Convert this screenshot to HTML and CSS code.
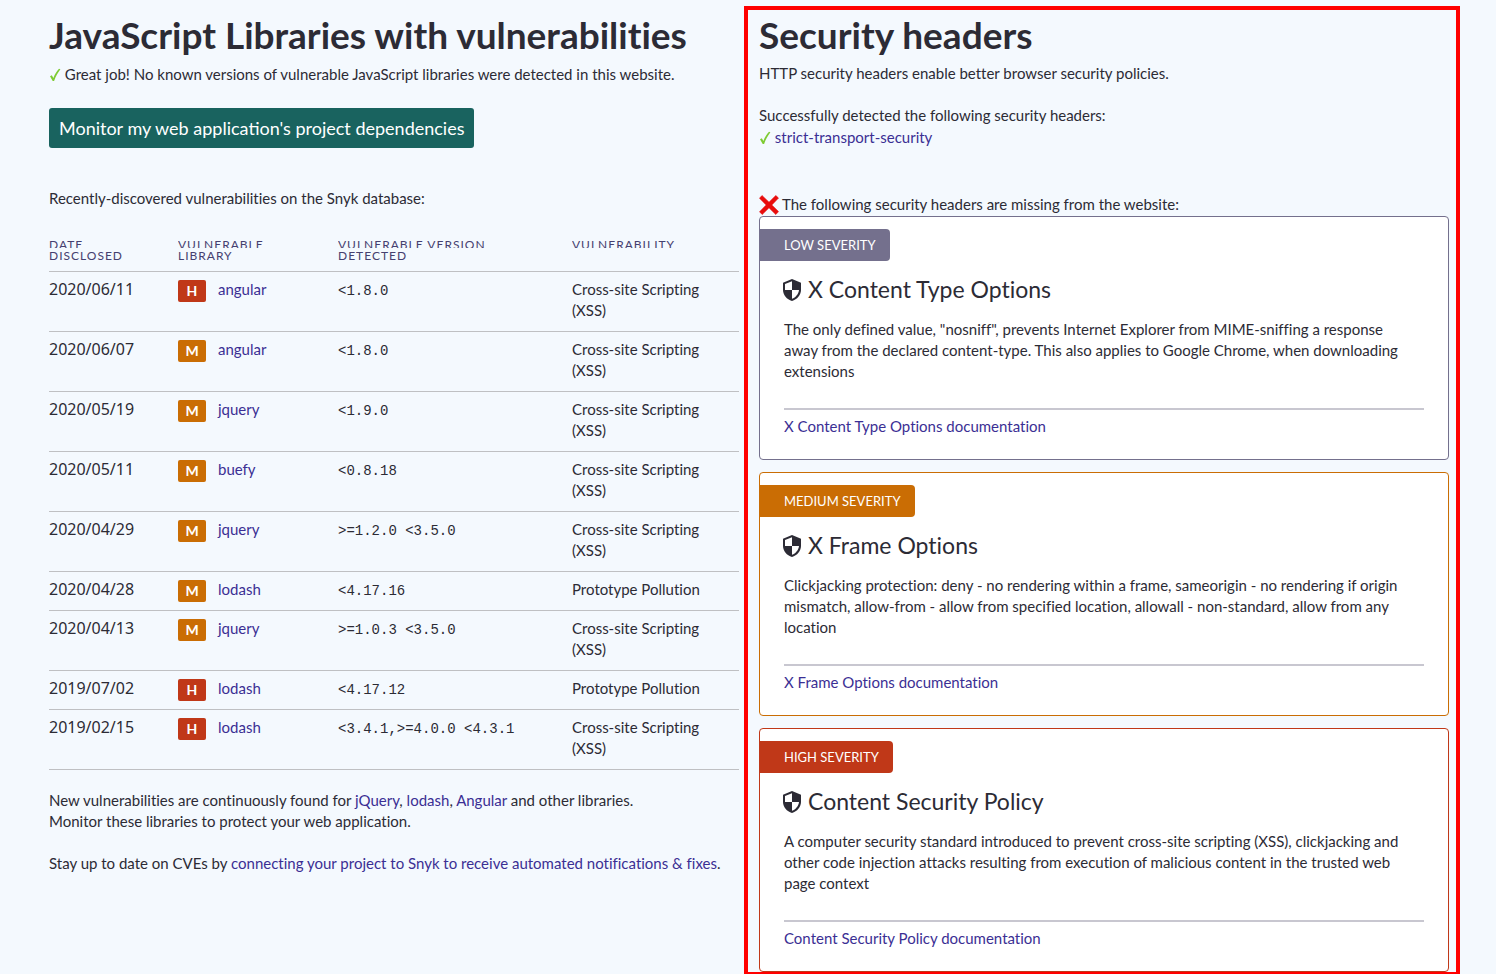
FILE: index.html
```html
<!DOCTYPE html>
<html lang="en">
<head>
<meta charset="utf-8">
<title>Website security report</title>
<link rel="stylesheet" href="styles.css">
</head>
<body>
<svg class="sprite" aria-hidden="true">
  <symbol id="check" viewBox="0 0 12 16"><path d="M1 9.200 2.800 8.200 4.400 11C5.800 7.400 7.600 4.400 10 1.800L11.400 2.200C8.800 5.600 6.600 9.600 5.100 14H3.700Z" fill="#7ecb33"/></symbol>
  <symbol id="cross" viewBox="0 0 20 20"><path d="M3 .5 10 7.200 16.800.5 19.500 3 12.800 10 19.500 16.600 16.800 19.500 10 12.800 3.200 19.500.5 16.800 7.200 10 .5 3.200Z" fill="#e80c0c" stroke="#e80c0c" stroke-width=".6"/></symbol>
  <symbol id="shield" viewBox="0 0 18 22"><path fill-rule="evenodd" d="M9 0 18 3.800V11C18 16 14.200 20.400 9 22 3.800 20.400 0 16 0 11V3.800ZM9 2.200 2 5.100V11H9ZM9 11V19.800C12.800 18.400 15.600 15 16 11Z" fill="#2c2b35"/></symbol>
</svg>
<main class="report">
  <section class="libraries">
    <h1>JavaScript Libraries with vulnerabilities</h1>
    <p class="status"><svg class="check"><use href="#check"/></svg> Great job! No known versions of vulnerable JavaScript libraries were detected in this website.</p>
    <button class="monitor" type="button">Monitor my web application's project dependencies</button>
    <p class="recent">Recently-discovered vulnerabilities on the Snyk database:</p>
    <table class="vulns">
      <thead>
        <tr>
          <th class="c-date" scope="col"><span class="top">Date</span><span class="low">disclosed</span></th>
          <th class="c-lib" scope="col"><span class="top">Vulnerable</span><span class="low">library</span></th>
          <th class="c-ver" scope="col"><span class="top">Vulnerable version</span><span class="low">detected</span></th>
          <th scope="col"><span class="top">Vulnerability</span></th>
        </tr>
      </thead>
      <tbody>
        <tr><td class="date">2020/06/11</td><td><span class="sev high">H</span><a href="#">angular</a></td><td class="ver">&lt;1.8.0</td><td>Cross-site Scripting<br>(XSS)</td></tr>
        <tr><td class="date">2020/06/07</td><td><span class="sev medium">M</span><a href="#">angular</a></td><td class="ver">&lt;1.8.0</td><td>Cross-site Scripting<br>(XSS)</td></tr>
        <tr><td class="date">2020/05/19</td><td><span class="sev medium">M</span><a href="#">jquery</a></td><td class="ver">&lt;1.9.0</td><td>Cross-site Scripting<br>(XSS)</td></tr>
        <tr><td class="date">2020/05/11</td><td><span class="sev medium">M</span><a href="#">buefy</a></td><td class="ver">&lt;0.8.18</td><td>Cross-site Scripting<br>(XSS)</td></tr>
        <tr><td class="date">2020/04/29</td><td><span class="sev medium">M</span><a href="#">jquery</a></td><td class="ver">&gt;=1.2.0 &lt;3.5.0</td><td>Cross-site Scripting<br>(XSS)</td></tr>
        <tr><td class="date">2020/04/28</td><td><span class="sev medium">M</span><a href="#">lodash</a></td><td class="ver">&lt;4.17.16</td><td>Prototype Pollution</td></tr>
        <tr><td class="date">2020/04/13</td><td><span class="sev medium">M</span><a href="#">jquery</a></td><td class="ver">&gt;=1.0.3 &lt;3.5.0</td><td>Cross-site Scripting<br>(XSS)</td></tr>
        <tr><td class="date">2019/07/02</td><td><span class="sev high">H</span><a href="#">lodash</a></td><td class="ver">&lt;4.17.12</td><td>Prototype Pollution</td></tr>
        <tr><td class="date">2019/02/15</td><td><span class="sev high">H</span><a href="#">lodash</a></td><td class="ver">&lt;3.4.1,&gt;=4.0.0 &lt;4.3.1</td><td>Cross-site Scripting<br>(XSS)</td></tr>
      </tbody>
    </table>
    <div class="notes">
      <p>New vulnerabilities are continuously found for <a href="#">jQuery</a>, <a href="#">lodash</a>, <a href="#">Angular</a> and other libraries.<br>Monitor these libraries to protect your web application.</p>
      <p>Stay up to date on CVEs by <a href="#">connecting your project to Snyk to receive automated notifications &amp; fixes</a>.</p>
    </div>
  </section>

  <section class="headers">
    <h1>Security headers</h1>
    <p class="intro">HTTP security headers enable better browser security policies.</p>
    <p class="detected">Successfully detected the following security headers:</p>
    <p class="found"><svg class="check"><use href="#check"/></svg> <a href="#">strict-transport-security</a></p>
    <p class="missing"><svg class="cross"><use href="#cross"/></svg>The following security headers are missing from the website:</p>
    <div class="cards">
      <article class="card low-card">
        <span class="badge">Low severity</span>
        <h2><svg class="shield"><use href="#shield"/></svg>X Content Type Options</h2>
        <p>The only defined value, "nosniff", prevents Internet Explorer from MIME-sniffing a response<br>away from the declared content-type. This also applies to Google Chrome, when downloading<br>extensions</p>
        <hr>
        <a href="#">X Content Type Options documentation</a>
      </article>
      <article class="card medium-card">
        <span class="badge">Medium severity</span>
        <h2><svg class="shield"><use href="#shield"/></svg>X Frame Options</h2>
        <p>Clickjacking protection: deny - no rendering within a frame, sameorigin - no rendering if origin<br>mismatch, allow-from - allow from specified location, allowall - non-standard, allow from any<br>location</p>
        <hr>
        <a href="#">X Frame Options documentation</a>
      </article>
      <article class="card high-card">
        <span class="badge">High severity</span>
        <h2><svg class="shield"><use href="#shield"/></svg>Content Security Policy</h2>
        <p>A computer security standard introduced to prevent cross-site scripting (XSS), clickjacking and<br>other code injection attacks resulting from execution of malicious content in the trusted web<br>page context</p>
        <hr>
        <a href="#">Content Security Policy documentation</a>
      </article>
    </div>
  </section>
</main>
</body>
</html>
```
FILE: styles.css
```css
* { box-sizing: border-box; }
body {
  margin: 0;
  background: #f4f9fe;
  color: #2c2b35;
  font: 15px/21px Lato, "Open Sans", sans-serif;
  font-variant-ligatures: none;
}
p, h1, h2 { margin: 0; }
a { color: #3b2f94; text-decoration: none; }
.sprite { position: absolute; width: 0; height: 0; }

.report {
  display: grid;
  grid-template-columns: minmax(0, 690fr) minmax(0, 716fr);
  column-gap: 5px;
  align-items: start;
  padding: 6px 36px 0 49px;
}
.libraries { padding-top: 4px; }
h1 { font-size: 37px; line-height: 50px; font-weight: 700; white-space: nowrap; }
.status { margin-top: 4px; }
.check { width: 12px; height: 16px; vertical-align: -3px; }
.monitor {
  display: block;
  height: 40px;
  margin-top: 23px;
  padding: 0 10px;
  border: 0;
  border-radius: 3px;
  background: #19635f;
  color: #fff;
  font: 18px/24px Lato, "Open Sans", sans-serif;
}
.recent { margin-top: 40px; }

.vulns { width: 100%; margin-top: 29px; border-collapse: separate; border-spacing: 0; table-layout: fixed; }
.c-date { width: 129px; }
.c-lib { width: 160px; }
.c-ver { width: 234px; }
.vulns th {
  padding: 0 0 8px;
  border-bottom: 1px solid #bfc0c3;
  color: #45406f;
  font-size: 12px;
  font-weight: 400;
  letter-spacing: 1px;
  text-align: left;
  text-transform: uppercase;
  vertical-align: top;
}
.top, .low { display: block; white-space: nowrap; line-height: 14px; }
.top { height: 10px; overflow: hidden; }
.low { margin-top: 1px; }
.vulns td { padding: 7px 0 10px; border-bottom: 1px solid #bfc0c3; vertical-align: baseline; white-space: nowrap; }
.vulns .date { font-family: "Noto Sans", sans-serif; font-size: 16px; }
.vulns .ver { font-family: "Liberation Mono", monospace; font-size: 14px; line-height: 17px; }
.sev {
  display: inline-block;
  width: 28px;
  height: 22px;
  margin: 1px 12px -2px 0;
  border-radius: 2px;
  color: #fff;
  font-size: 14px;
  font-weight: 700;
  text-align: center;
  vertical-align: top;
}
.high { background: #c03818; }
.medium { background: #ca6d04; }
.notes { display: grid; gap: 21px; margin-top: 20px; }

.headers { padding: 0 7px 0 11px; border: 4px solid #f00; border-bottom-width: 2px; }
.intro { margin-top: 3px; }
.detected { margin-top: 21px; }
.found { margin-top: 1px; }
.missing { display: flex; align-items: center; gap: 3px; margin-top: 46px; }
.cross { width: 20px; height: 20px; }

.cards { display: grid; grid-template-columns: minmax(0, 1fr); gap: 12px; margin-top: 1px; }
.card { padding: 12px 24px 22px; border: 1px solid; border-radius: 4px; background: #fff; }
.badge {
  display: block;
  width: max-content;
  margin-left: -24px;
  padding: 0 14px 0 24px;
  border-radius: 0 4px 4px 0;
  color: #fff;
  font-size: 13px;
  line-height: 32px;
  text-transform: uppercase;
}
.low-card { border-color: #74708d; }
.low-card .badge { background: #74708d; }
.medium-card { border-color: #ca6d04; }
.medium-card .badge { background: #ca6d04; }
.high-card { border-color: #c03818; }
.high-card .badge { background: #c03818; }
.card h2 { display: flex; align-items: center; gap: 7px; margin: 12px 0 14px; font-size: 23px; line-height: 32px; font-weight: 400; }
.card p { white-space: nowrap; }
.shield { width: 18px; height: 22px; margin: 2px 0 0 -1px; }
.card hr { height: 2px; margin: 26px 0 6px; border: 0; background: #c8c7d0; }
.card a { display: block; }
```
